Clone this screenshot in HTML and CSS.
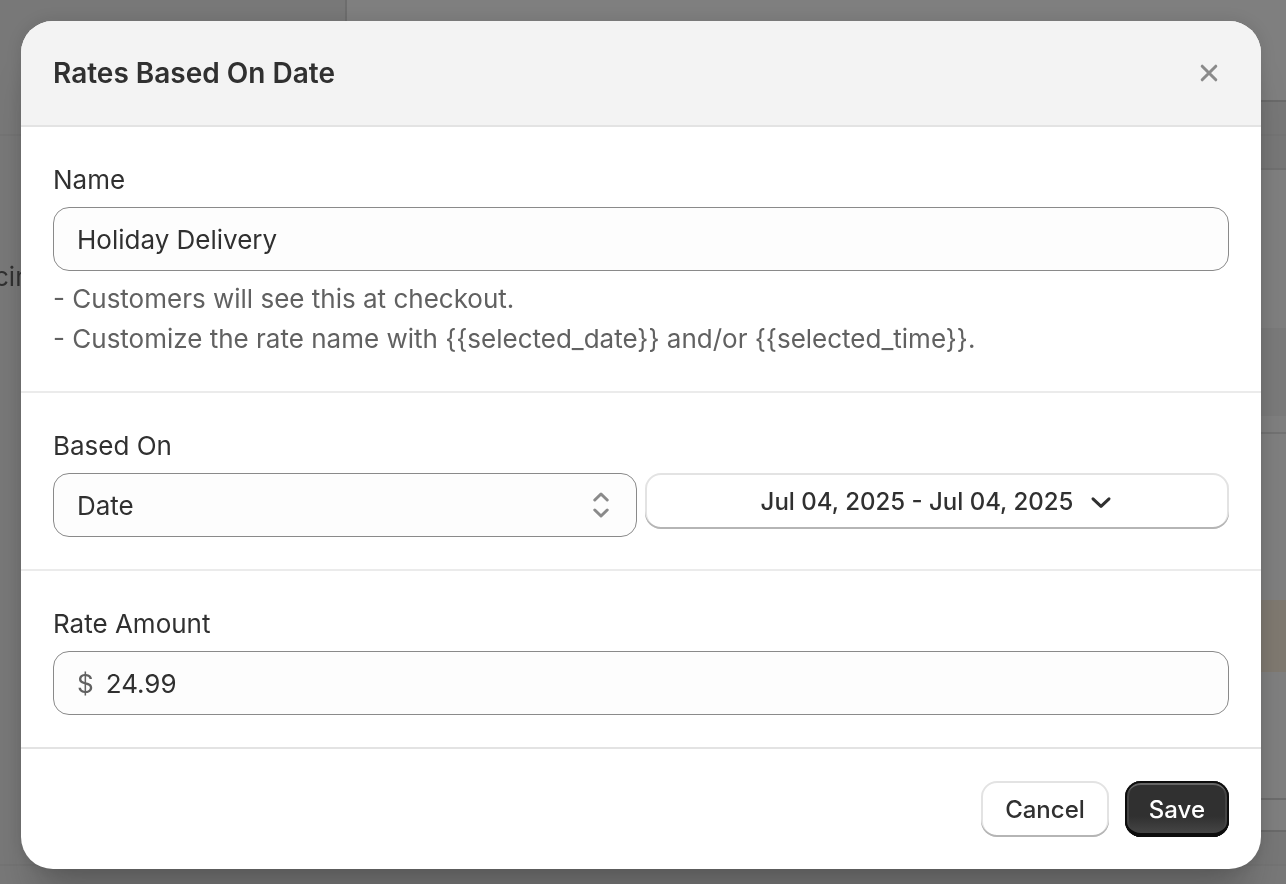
FILE: index.html
```html
<!DOCTYPE html>
<html lang="en">
<head>
<meta charset="utf-8">
<meta name="viewport" content="width=device-width, initial-scale=1">
<title>Rates Based On Date</title>
<link rel="stylesheet" href="styles.css">
</head>
<body>
<div class="page" aria-hidden="true">
  <div class="page-side">
    <div class="side-top"></div>
    <div class="side-middle"><span class="side-label">cin</span></div>
  </div>
  <div class="page-main">
    <div class="card card-top"></div>
    <div class="gap gap-upper"></div>
    <div class="gap gap-lower"></div>
    <div class="card card-head"></div>
    <div class="card band"></div>
    <div class="card card-rule"></div>
    <div class="card card-rows"></div>
    <div class="card notice"></div>
    <div class="card card-end"></div>
    <div class="card card-foot"></div>
    <div class="gap gap-bottom"></div>
  </div>
</div>

<div class="overlay">
  <form class="modal" role="dialog" aria-modal="true" aria-labelledby="modal-title">
    <header class="modal-header">
      <h2 class="modal-title" id="modal-title">Rates Based On Date</h2>
      <button class="close" type="button" aria-label="Close">
        <svg width="40" height="40" viewBox="0 0 40 40" fill="none" stroke="currentColor" stroke-width="3" stroke-linecap="round"><path d="M13.2 13.2 26.8 26.8M26.8 13.2 13.2 26.8"/></svg>
      </button>
    </header>

    <section class="section">
      <label class="label" for="name">Name</label>
      <input class="field" id="name" type="text" value="Holiday Delivery" aria-describedby="name-help">
      <div class="help" id="name-help">
        <p>- Customers will see this at checkout.</p>
        <p>- Customize the rate name with {{selected_date}} and/or {{selected_time}}.</p>
      </div>
    </section>

    <section class="section">
      <label class="label" for="based-on">Based On</label>
      <div class="row">
        <div class="select-wrap">
          <select class="field" id="based-on"><option>Date</option></select>
          <svg class="select-icon" width="24" height="32" viewBox="0 0 24 32" fill="none" stroke="currentColor" stroke-width="3" stroke-linecap="round" stroke-linejoin="round"><path d="M5.8 11 12 5l6.2 6M5.8 21 12 27l6.2-6"/></svg>
        </div>
        <button class="button date-button" type="button">
          <span>Jul 04, 2025 - Jul 04, 2025</span>
          <svg width="24" height="24" viewBox="0 0 24 24" fill="none" stroke="currentColor" stroke-width="3" stroke-linecap="round" stroke-linejoin="round"><path d="M4 8.8 12 16.4 20 8.8"/></svg>
        </button>
      </div>
    </section>

    <section class="section">
      <label class="label" for="amount">Rate Amount</label>
      <div class="field money">
        <span class="prefix">$</span>
        <input class="money-input" id="amount" type="text" inputmode="decimal" value="24.99">
      </div>
    </section>

    <footer class="modal-footer">
      <button class="button" type="button">Cancel</button>
      <button class="button primary" type="submit">Save</button>
    </footer>
  </form>
</div>
</body>
</html>
```

FILE: styles.css
```css
* {
  box-sizing: border-box;
}

body {
  margin: 0;
  min-height: 100vh;
  background: #787878;
  color: #303030;
  font-family: Inter, "Liberation Sans", sans-serif;
  font-size: 26px;
  line-height: 40px;
}

h2,
p {
  margin: 0;
}

button,
input,
select {
  font: inherit;
  color: inherit;
}

/* Dimmed page behind the dialog */
.page {
  position: fixed;
  inset: 0;
  display: flex;
  overflow: hidden;
}

.page-side {
  flex: 0 0 347px;
  align-self: flex-start;
  border-right: 2px solid #6d6d6d;
}

.side-top {
  height: 136px;
  border-bottom: 2px solid #747474;
}

.side-middle {
  height: 730px;
  padding-top: 121px;
  border-bottom: 2px solid #747474;
}

.side-label {
  margin-left: -6px;
}

.page-main {
  flex: 1;
}

.card {
  background: #7f7f7f;
}

.card-top {
  height: 102px;
  border-bottom: 2px solid #6a6a6a;
}

.gap {
  background: #777777;
}

.gap-upper {
  height: 34px;
  border-bottom: 2px solid #747474;
}

.gap-lower {
  height: 34px;
  border-bottom: 2px solid #707070;
}

.card-head {
  height: 158px;
}

.band {
  height: 88px;
  background: #7a7a7a;
}

.card-rule {
  height: 18px;
  border-bottom: 2px solid #727272;
}

.card-rows {
  height: 166px;
}

.notice {
  height: 72px;
  background: #7f7970;
}

.card-end {
  height: 128px;
  border-bottom: 2px solid #6c6c6c;
}

.card-foot {
  height: 32px;
  border-bottom: 2px solid #6a6a6a;
}

.gap-bottom {
  height: 34px;
  border-bottom: 2px solid #747474;
}

/* Dialog */
.overlay {
  position: relative;
  padding: 21px 25px 15px 21px;
}

.modal {
  overflow: hidden;
  border-radius: 32px;
  background: #ffffff;
  box-shadow: 0 40px 40px -16px rgba(26, 26, 26, 0.28), 0 0 16px rgba(26, 26, 26, 0.12);
}

.modal-header {
  display: flex;
  align-items: center;
  justify-content: space-between;
  padding: 32px;
  border-bottom: 2px solid #e3e3e3;
  background: #f3f3f3;
}

.modal-title {
  font-size: 28px;
  font-weight: 600;
  line-height: 40px;
}

.close {
  display: flex;
  padding: 0;
  border: 0;
  background: none;
  color: #8a8a8a;
}

.section {
  padding: 32px;
  border-bottom: 2px solid #ebebeb;
}

.section:last-of-type {
  border-color: #e3e3e3;
}

.label {
  display: block;
  margin-bottom: 6px;
  line-height: 42px;
}

.field {
  display: block;
  width: 100%;
  height: 64px;
  padding: 1px 23px 0;
  border: 1px solid #8a8a8a;
  border-radius: 16px;
  background: #fdfdfd;
}

.help {
  margin-top: 8px;
  color: #616161;
}

.row {
  display: grid;
  grid-template-columns: 1fr 1fr;
  align-items: start;
  gap: 8px;
}

.select-wrap {
  position: relative;
}

select.field {
  appearance: none;
}

.select-icon {
  position: absolute;
  top: 16px;
  right: 24px;
  color: #8a8a8a;
  pointer-events: none;
}

.button {
  display: flex;
  align-items: center;
  justify-content: center;
  height: 56px;
  padding: 2px 24px 0;
  border: 0;
  border-radius: 16px;
  background: #ffffff;
  box-shadow: inset 0 -2px 0 #b5b5b5, inset 0 0 0 2px #e3e3e3;
  font-size: 24px;
  font-weight: 500;
}

.date-button {
  gap: 16px;
}

.money {
  display: flex;
  align-items: center;
  gap: 12px;
}

.prefix {
  color: #616161;
}

.money-input {
  flex: 1;
  min-width: 0;
  padding: 0;
  border: 0;
  background: none;
}

.modal-footer {
  display: flex;
  justify-content: flex-end;
  gap: 16px;
  padding: 32px;
}

.primary {
  background: linear-gradient(#303030 63%, #4a4a4a);
  box-shadow: inset 0 0 0 2px #0d0d0d, inset 0 -4px 0 #0d0d0d, inset 0 4px 0 #666666, inset 3px 0 0 1px #444444, inset -3px 0 0 1px #444444;
  color: #ffffff;
}
```
